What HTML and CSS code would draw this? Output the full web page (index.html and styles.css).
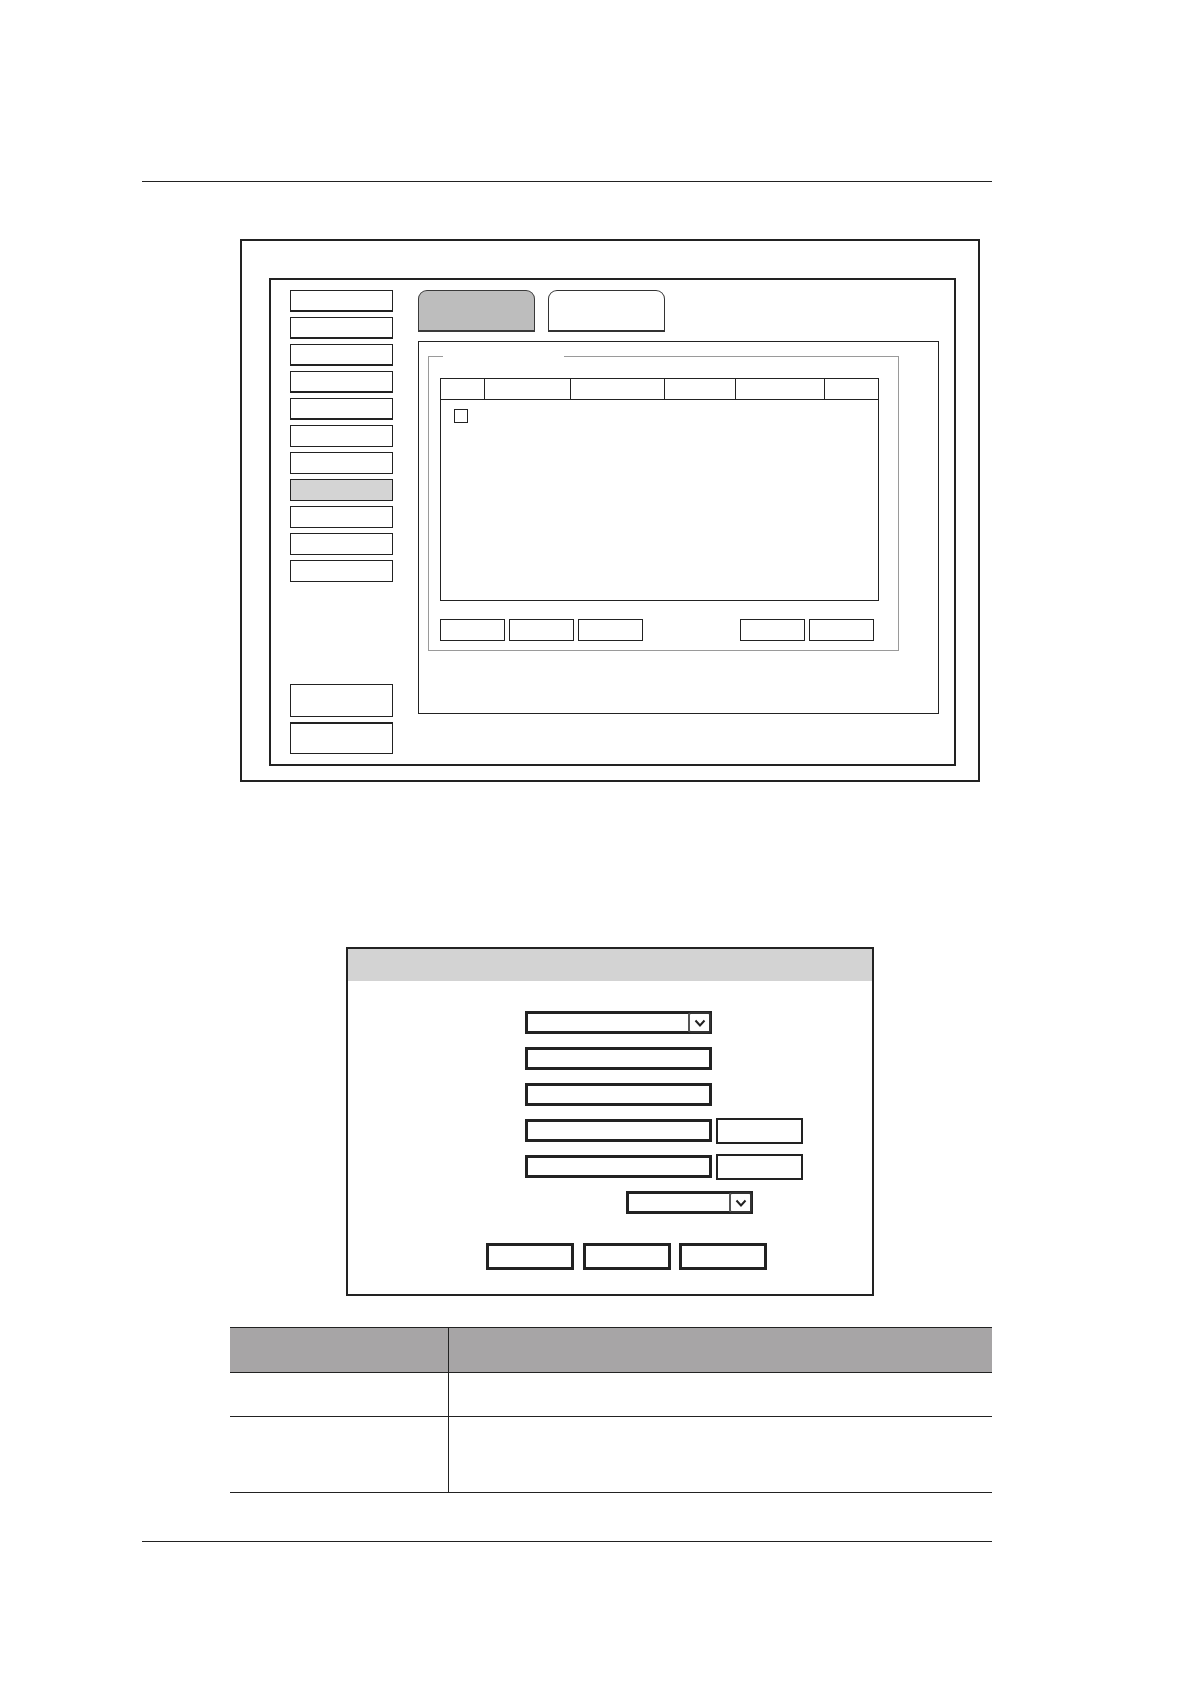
FILE: index.html
```html
<!DOCTYPE html>
<html>
<head>
<meta charset="utf-8">
<link rel="stylesheet" href="styles.css">
</head>
<body>
<div class="page">
  <div class="rule rule-top"></div>

  <div class="fig1">
    <div class="screen">
      <div class="sidebar">
        <div class="side-btn raised"></div>
        <div class="side-btn raised"></div>
        <div class="side-btn raised"></div>
        <div class="side-btn raised"></div>
        <div class="side-btn raised"></div>
        <div class="side-btn"></div>
        <div class="side-btn"></div>
        <div class="side-btn sel"></div>
        <div class="side-btn"></div>
        <div class="side-btn"></div>
        <div class="side-btn"></div>
        <div class="side-spacer"></div>
        <div class="side-btn big"></div>
        <div class="side-btn big raised-top"></div>
      </div>
      <div class="main">
        <div class="tabs">
          <div class="tab active"></div>
          <div class="tab"></div>
        </div>
        <div class="panel">
          <div class="group">
            <div class="list">
              <div class="list-head">
                <div class="hcell"></div>
                <div class="hcell"></div>
                <div class="hcell"></div>
                <div class="hcell"></div>
                <div class="hcell"></div>
                <div class="hcell last"></div>
              </div>
              <div class="list-body">
                <div class="checkbox"></div>
              </div>
            </div>
            <div class="btn-row">
              <div class="sbtn"></div>
              <div class="sbtn"></div>
              <div class="sbtn"></div>
              <div class="row-gap"></div>
              <div class="sbtn"></div>
              <div class="sbtn last"></div>
            </div>
          </div>
        </div>
      </div>
    </div>
  </div>

  <div class="dialog">
    <div class="dlg-head"></div>
    <div class="dlg-body">
      <div class="frow">
        <div class="field select">
          <div class="arrow">
            <svg viewBox="0 0 12 10" width="12" height="10"><path d="M1.5 2.5 L6 7.5 L10.5 2.5" fill="none" stroke="#222" stroke-width="2"/></svg>
          </div>
        </div>
      </div>
      <div class="frow"><div class="field"></div></div>
      <div class="frow"><div class="field"></div></div>
      <div class="frow"><div class="field"></div><div class="smallbox"></div></div>
      <div class="frow"><div class="field"></div><div class="smallbox"></div></div>
      <div class="frow frow-dd">
        <div class="field select short">
          <div class="arrow">
            <svg viewBox="0 0 12 10" width="12" height="10"><path d="M1.5 2.5 L6 7.5 L10.5 2.5" fill="none" stroke="#222" stroke-width="2"/></svg>
          </div>
        </div>
      </div>
      <div class="dlg-btns">
        <div class="dbtn"></div>
        <div class="dbtn b2"></div>
        <div class="dbtn b3"></div>
      </div>
    </div>
  </div>

  <div class="tbl">
    <div class="trow thead">
      <div class="tcell first"></div>
      <div class="tcell"></div>
    </div>
    <div class="trow r1">
      <div class="tcell first"></div>
      <div class="tcell"></div>
    </div>
    <div class="trow r2">
      <div class="tcell first"></div>
      <div class="tcell"></div>
    </div>
  </div>

  <div class="rule rule-bottom"></div>
</div>
</body>
</html>
```

FILE: styles.css
```css
* { box-sizing: border-box; }
html, body { margin: 0; padding: 0; background: #fff; }
body { font-family: "Liberation Sans", Arial, sans-serif; }
.page { width: 1191px; height: 1684px; overflow: hidden; }

.rule { height: 1px; background: #222; width: 850px; margin-left: 142px; }
.rule-top { margin-top: 181px; }
.rule-bottom { margin-top: 48px; }

/* Figure 1 */
.fig1 {
  margin: 57px 0 0 240px;
  width: 740px;
  height: 543px;
  border: 2px solid #222;
  padding: 37px 0 0 26.5px;
}
.screen {
  width: 687px;
  height: 488px;
  border: 2px solid #222;
  display: flex;
  align-items: flex-start;
  padding: 9.7px 0 0 19.8px;
}
.sidebar {
  width: 102.4px;
  height: 464px;
  display: flex;
  flex-direction: column;
  gap: 5px;
}
.side-btn { height: 22px; border: 1.5px solid #222; flex: none; background: #fff; }
.side-btn.raised { border-bottom-width: 2px; }
.side-btn.sel { background: #d4d4d4; }
.side-btn.big { height: 32.4px; }
.side-btn.raised-top { border-top-width: 2px; height: 32px; }
.side-spacer { flex: 1; }

.main { margin-left: 25.6px; width: 520.4px; }
.tabs { display: flex; gap: 13.6px; height: 42px; margin-top: 0.6px; }
.tab {
  width: 116.4px;
  height: 42px;
  border: 1.5px solid #333;
  border-bottom-width: 2px;
  border-radius: 9px 9px 0 0;
  background: #fff;
}
.tab.active { background: #bdbdbd; border-color: #3a3a3a; }

.panel {
  margin-top: 8.4px;
  height: 373.6px;
  border: 1.5px solid #222;
  padding: 14.3px 0 0 9px;
}
.group {
  position: relative;
  width: 470.4px;
  height: 295.3px;
  border: 1.5px solid #9a9a9a;
  padding: 21px 0 0 11px;
}
.group::before {
  content: "";
  position: absolute;
  top: -2px;
  left: 13.7px;
  width: 121px;
  height: 3px;
  background: #fff;
}
.list {
  width: 438.4px;
  height: 223px;
  border: 1.5px solid #222;
  display: flex;
  flex-direction: column;
}
.list-head {
  display: grid;
  grid-template-columns: 44px 85.4px 94px 71.6px 88.4px 1fr;
  height: 21.4px;
  border-bottom: 1.5px solid #222;
  flex: none;
}
.hcell { border-right: 1.5px solid #222; }
.hcell.last { border-right: none; }
.list-body { flex: 1; padding: 8.6px 0 0 13.2px; }
.checkbox { width: 13.6px; height: 13.6px; border: 1.5px solid #222; }

.btn-row { display: flex; margin-top: 18px; width: 438.4px; padding-right: 5px; }
.sbtn { width: 64.4px; height: 22.4px; border: 1.5px solid #222; margin-right: 4.6px; flex: none; }
.sbtn.last { margin-right: 0; }
.row-gap { flex: 1; }

/* Dialog */
.dialog {
  margin: 165.3px 0 0 345.6px;
  width: 528px;
  height: 348.7px;
  border: 2px solid #222;
}
.dlg-head { height: 31.4px; background: #d3d3d3; }
.dlg-body { padding-top: 30.6px; }
.frow {
  display: flex;
  align-items: flex-start;
  height: 23px;
  margin: 0 0 13px 177.7px;
}
.field {
  width: 186.8px;
  height: 23px;
  border: 3px solid #222;
  background: #fff;
  flex: none;
}
.field.select { display: flex; justify-content: flex-end; }
.field.short { width: 127px; }
.arrow {
  width: 23px;
  height: 21px;
  margin: -2px -2px 0 0;
  border: 2px solid #333;
  border-left-color: #555;
  border-radius: 3px;
  display: flex;
  align-items: center;
  justify-content: center;
  background: #fff;
}
.smallbox {
  width: 87.7px;
  height: 26px;
  margin: -1px 0 0 3.5px;
  border: 2px solid #222;
  flex: none;
}
.frow-dd { margin-top: 2.3px; margin-left: 278.5px; }
.dlg-btns {
  display: flex;
  margin: 28.7px 0 0 138.4px;
}
.dbtn {
  width: 87.8px;
  height: 26.7px;
  border: 3px solid #222;
  flex: none;
}
.dbtn.b2 { margin-left: 9.4px; }
.dbtn.b3 { margin-left: 8px; }

/* Bottom table */
.tbl {
  margin: 31.3px 0 0 230px;
  width: 762px;
  border-top: 1.5px solid #222;
}
.trow {
  display: grid;
  grid-template-columns: 218.8px 1fr;
  border-bottom: 1.5px solid #222;
}
.tcell.first { border-right: 1.5px solid #222; }
.thead { height: 44.4px; background: #a7a5a6; }
.r1 { height: 44.6px; }
.r2 { height: 76px; }
```
